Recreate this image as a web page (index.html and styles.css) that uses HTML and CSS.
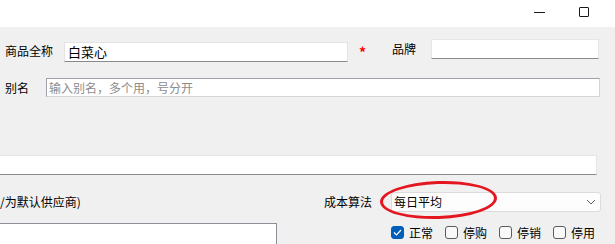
FILE: index.html
```html
<!DOCTYPE html>
<html lang="zh-CN">
<head>
<meta charset="utf-8">
<link rel="stylesheet" href="styles.css">
</head>
<body>
<div class="window">
  <div class="titlebar">
    <span class="tb-btn tb-min"><span class="min-line"></span></span>
    <span class="tb-btn tb-max"><span class="max-box"></span></span>
  </div>
  <div class="content">
    <div class="row row1">
      <span class="label lbl-name">商品全称</span>
      <div class="input input-name">白菜心</div>
      <span class="required">*</span>
      <span class="label lbl-brand">品牌</span>
      <div class="input input-brand"></div>
    </div>
    <div class="row row2">
      <span class="label lbl-alias">别名</span>
      <div class="input input-alias"><span class="placeholder">输入别名，多个用，号分开</span></div>
    </div>
    <div class="row row3">
      <div class="input input-wide"></div>
    </div>
    <div class="row row4">
      <span class="label lbl-supplier">/为默认供应商)</span>
      <span class="label lbl-cost">成本算法</span>
      <div class="combo">
        <span class="combo-text">每日平均</span>
        <svg class="chevron" width="10" height="6" viewBox="0 0 10 6"><path d="M1 1 L5 5 L9 1" fill="none" stroke="#5f5f5f" stroke-width="1"/></svg>
        <div class="annot"></div>
      </div>
    </div>
    <div class="row row5">
      <div class="memo"></div>
      <div class="checks">
        <label class="check"><span class="box checked"><svg width="9" height="7" viewBox="0 0 9 7"><path d="M1 3.5 L3.5 6 L8 1" fill="none" stroke="#fff" stroke-width="1.2"/></svg></span>正常</label>
        <label class="check"><span class="box"></span>停购</label>
        <label class="check"><span class="box"></span>停销</label>
        <label class="check"><span class="box"></span>停用</label>
      </div>
    </div>
  </div>
</div>
</body>
</html>
```

FILE: styles.css
```css
* { box-sizing: border-box; }
html, body { margin: 0; padding: 0; }
body {
  width: 615px;
  height: 244px;
  overflow: hidden;
  font-family: "Noto Sans CJK SC", "Noto Sans", sans-serif;
  font-size: 12px;
  color: #000;
  background: #f0f0f0;
}
.window { width: 615px; height: 244px; overflow: hidden; }
.titlebar {
  height: 27px;
  background: #fff;
  display: flex;
  justify-content: flex-end;
  align-items: flex-start;
  padding-right: 26px;
}
.tb-btn { display: flex; align-items: center; justify-content: center; height: 24px; }
.tb-min { width: 11px; margin-right: 34px; }
.min-line { width: 11px; height: 1px; background: #1a1a1a; display: block; }
.tb-max { width: 10px; }
.max-box { width: 10px; height: 10px; border: 1px solid #1a1a1a; border-radius: 1px; display: block; }

.content { padding-left: 5px; height: 217px; }
.row { display: flex; align-items: flex-start; }
.label { white-space: nowrap; line-height: 20px; }

.input {
  background: #fff;
  height: 20px;
  line-height: 18px;
  padding-left: 3px;
  white-space: nowrap;
}

.row1 { margin-top: 12px; height: 23px; }
.lbl-name { margin-top: 2px; width: 59px; }
.input-name {
  margin-top: 3px;
  width: 284px;
  border: 1px solid #e3e3e3;
  border-bottom: 1px solid #8a8a8a;
  font-size: 13px;
  line-height: 17px;
}
.required {
  color: #f00;
  margin-left: 11px;
  margin-top: 3px;
  font-size: 14px;
  font-weight: bold;
  line-height: 20px;
  width: 8px;
}
.lbl-brand { margin-left: 25px; width: 39px; }
.input-brand {
  width: 168px;
  border: 1px solid #e6e6e6;
  border-bottom: 1px solid #8a8a8a;
}

.row2 { margin-top: 16px; height: 19px; }
.lbl-alias { width: 41px; line-height: 19px; }
.input-alias {
  width: 554px;
  height: 19px;
  border: 1px solid #d5d5d5;
  border-top-color: #a0a0a8;
  border-left-color: #a0a0a8;
  line-height: 17px;
  padding-left: 2px;
}
.placeholder { color: #8c8c8c; }

.row3 { margin-top: 58px; height: 19px; }
.input-wide {
  margin-left: -10px;
  width: 602px;
  height: 20px;
  border: 1px solid #e6e6e6;
  border-bottom: 1px solid #8a8a8a;
}

.row4 { margin-top: 18px; height: 20px; position: relative; }
.lbl-supplier { margin-left: -5px; width: 324px; line-height: 20px; }
.lbl-cost { width: 67px; line-height: 20px; }
.combo {
  position: relative;
  width: 210px;
  height: 20px;
  background: #fdfdfd;
  border: 1px solid #dcdcdc;
  border-radius: 3px;
  display: flex;
  align-items: center;
  justify-content: space-between;
  padding-left: 2px;
  padding-right: 4px;
}
.combo-text { font-size: 12px; line-height: 18px; }
.chevron { display: block; }
.annot {
  position: absolute;
  left: -12px;
  top: -12px;
  width: 117px;
  height: 38px;
  border: 3px solid #e4161f;
  border-radius: 50%;
  transform: rotate(-2deg);
}

.row5 { margin-top: 11px; height: 40px; }
.memo {
  margin-left: -10px;
  width: 282px;
  height: 40px;
  background: #fff;
  border: 1px solid #8e8e96;
}
.checks { display: flex; margin-left: 114px; margin-top: 3px; }
.check { display: flex; align-items: center; height: 13px; line-height: 13px; margin-right: 12px; white-space: nowrap; }
.box {
  width: 13px;
  height: 13px;
  border: 1px solid #5c5c5c;
  border-radius: 3px;
  background: #f9f9f9;
  margin-right: 5px;
  display: flex;
  align-items: center;
  justify-content: center;
}
.box.checked { background: #005fb8; border-color: #005fb8; }
```
